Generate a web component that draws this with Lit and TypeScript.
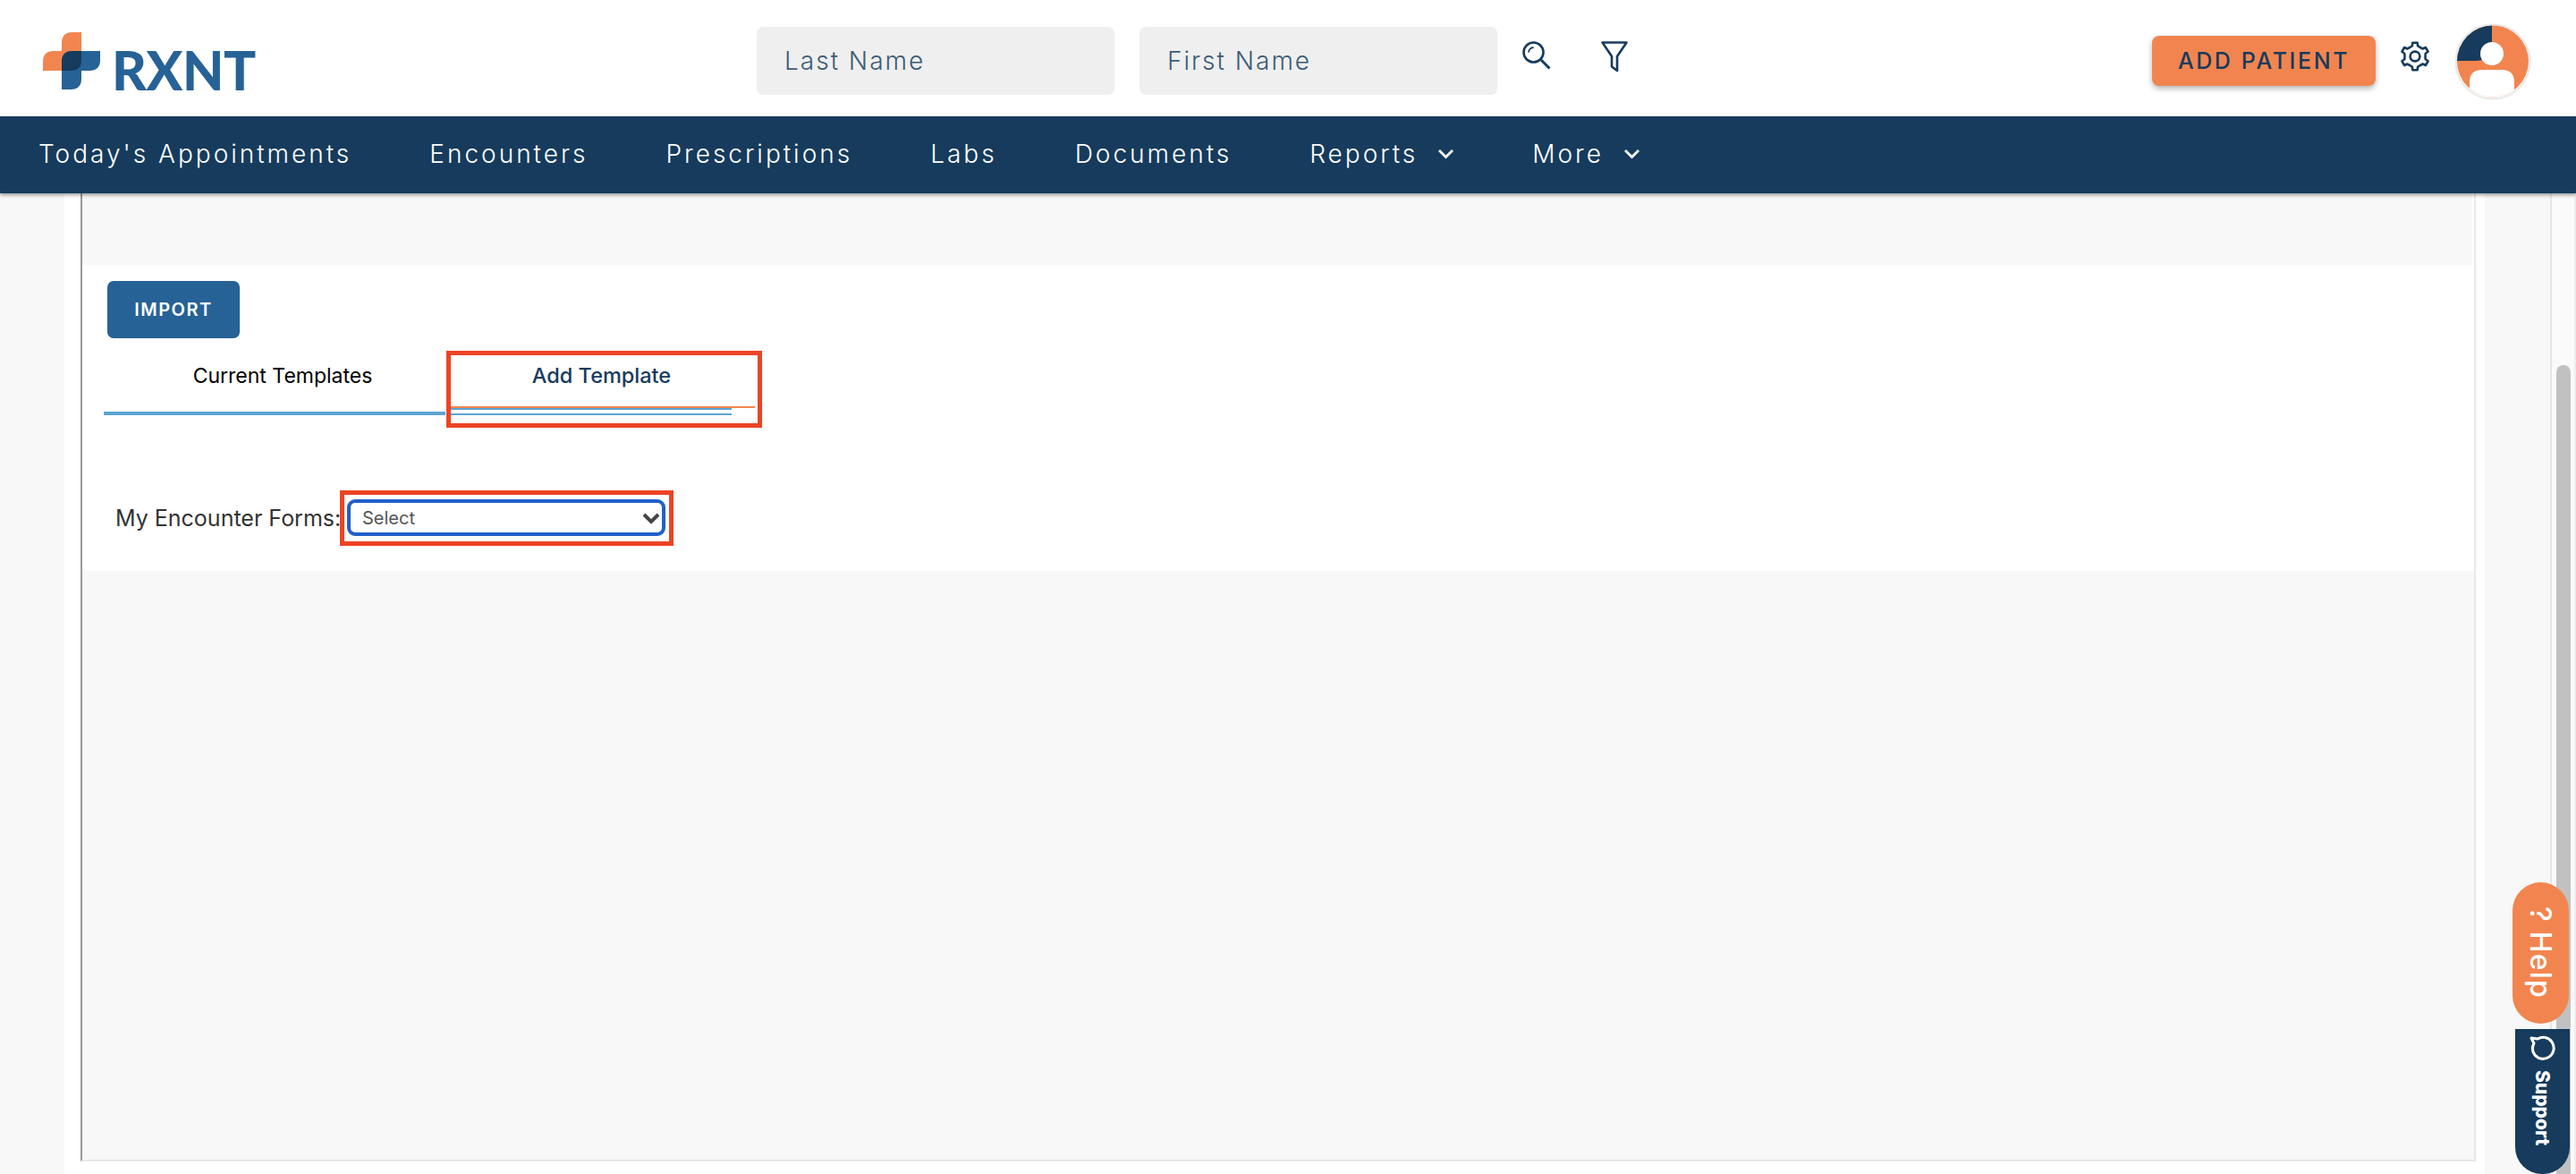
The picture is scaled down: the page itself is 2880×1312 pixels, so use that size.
import { LitElement, html, css } from "lit";
import { customElement } from "lit/decorators.js";

function gearPath(): string {
  const cx = 17, cy = 17, teeth = 6;
  const pts: string[] = [];
  for (let i = 0; i < teeth; i++) {
    const a = (i * 2 * Math.PI) / teeth - Math.PI / 2;
    const step = (2 * Math.PI) / teeth;
    const list: [number, number][] = [
      [11.5, a - step * 0.5],
      [12.2, a - step * 0.24],
      [15.5, a - step * 0.17],
      [15.5, a + step * 0.17],
      [12.2, a + step * 0.24],
    ];
    for (const [r, t] of list) {
      pts.push(`${(cx + r * Math.cos(t)).toFixed(2)} ${(cy + r * Math.sin(t)).toFixed(2)}`);
    }
  }
  return "M" + pts.join("L") + "Z";
}

const chevron = html`<svg class="chev" viewBox="0 0 19 12" width="19" height="12"><path d="M2 2l7.5 7.5L17 2" fill="none" stroke="#fff" stroke-width="2.8"/></svg>`;

@customElement("app-root")
export class AppRoot extends LitElement {
  static styles = css`
    :host { display: block; width: 2880px; height: 1312px; overflow: hidden; position: relative; background: #fff; font-family: "Inter", "Lato", sans-serif; color: #163b5c; }
    .page { display: flex; flex-direction: column; height: 1312px; }

    .header { height: 130px; display: flex; align-items: flex-start; background: #fff; padding-right: 50px; padding-left: 48px; box-sizing: border-box; flex: none; }
    .logo { display: flex; align-items: flex-end; margin-top: 36px; width: 236px; height: 64px; flex: none; }
    .logo svg { flex: none; }
    .logo-word { font-family: "Lato", sans-serif; font-weight: 900; font-size: 60px; line-height: 43px; height: 43px; color: #266296; margin-left: 13px; white-space: nowrap; letter-spacing: -0.4px; }
    .inputs { display: flex; gap: 28px; margin-left: 562px; margin-top: 30px; }
    .input { width: 400px; height: 76px; background: #efefef; border-radius: 7px; box-sizing: border-box; padding-left: 31px; display: flex; align-items: center; font-size: 28px; font-weight: 300; letter-spacing: 2px; color: #3c5c76; }
    .search { margin-left: 28px; margin-top: 46px; flex: none; }
    .filter { margin-left: 56px; margin-top: 46px; flex: none; }
    .add { margin-left: auto; margin-top: 40px; width: 250px; height: 56px; background: #f2854f; border-radius: 8px; box-shadow: 0 3px 6px rgba(0,0,0,.3); display: flex; align-items: center; justify-content: center; font-size: 25px; font-weight: 500; letter-spacing: 2.6px; color: #163b5c; }
    .gear { margin-left: 27px; margin-top: 46px; flex: none; }
    .avatar { margin-left: 28px; margin-top: 26px; flex: none; }

    .nav { height: 86px; flex: none; background: #163b5c; color: #fff; display: flex; align-items: center; gap: 87px; padding: 0 0 2px 43px; box-sizing: border-box; box-shadow: 0 2px 4px rgba(0,0,0,.4); position: relative; z-index: 2; font-size: 28px; font-weight: 300; letter-spacing: 3px; }
    .nav-item { display: flex; align-items: center; gap: 22px; }

    .content { flex: 1; display: flex; background: #f8f8f8; min-height: 0; }
    .gutter { width: 72px; flex: none; }
    .sheet { width: 2706px; flex: none; background: #fff; box-sizing: border-box; padding: 0 10px 14px 18px; display: flex; }
    .panel { flex: 1; display: flex; flex-direction: column; border-left: 2px solid #999; border-right: 2px solid #e8e8e8; border-bottom: 2px solid #e8e8e8; }
    .band { height: 80px; background: #f8f8f8; margin-right: 2px; flex: none; }
    .rest { flex: 1; background: #f8f8f8; }
    .section { height: 342px; flex: none; box-sizing: border-box; background: #fff; padding-top: 18px; display: flex; flex-direction: column; align-items: flex-start; }
    .import { margin-left: 28px; width: 148px; height: 64px; background: #266296; color: #fff; border-radius: 7px; display: flex; align-items: center; justify-content: center; font-size: 20px; font-weight: 600; letter-spacing: 1.5px; }
    .tabs { display: flex; align-items: flex-start; margin-top: 14px; margin-left: 24px; }
    .tab { width: 382px; height: 72px; box-sizing: border-box; border-bottom: 4px solid #5ba4d3; text-align: center; font-size: 23px; font-weight: 400; color: #000; line-height: 56px; margin-right: 1px; padding-left: 18px; white-space: nowrap; }
    .tab-add { width: 353px; height: 86px; box-sizing: border-box; border: 5px solid #ee4324; color: #163b5c; font-size: 23.5px; font-weight: 500; display: flex; flex-direction: column; }
    .tab-label { height: 57px; line-height: 46px; text-align: center; padding-right: 6px; flex: none; white-space: nowrap; }
    .line-o { width: 340px; height: 2px; background: #f2854f; flex: none; }
    .line-b1 { width: 314px; height: 2px; background: #5ba4d3; flex: none; }
    .line-b2 { width: 314px; height: 2px; background: #5ba4d3; flex: none; margin-top: 4px; }
    .form { display: flex; align-items: center; margin-top: 70px; margin-left: 37px; }
    .label { font-size: 25px; color: #333; white-space: nowrap; width: 251px; flex: none; }
    .redbox { width: 373px; height: 62px; box-sizing: border-box; border: 5px solid #ee4324; padding: 5px 4px 6px 3px; flex: none; }
    .select { height: 41px; box-sizing: border-box; border: 4px solid #2060c8; border-radius: 9px; display: flex; align-items: center; justify-content: space-between; padding: 0 2px 0 13px; font-family: "Inter", sans-serif; font-size: 20px; color: #555; }

    .gap { width: 73px; flex: none; }
    .scroll { flex: 1; box-sizing: border-box; background: #fafafa; border-left: 2px solid #e6e6e6; border-right: 2px solid #eee; padding: 192px 4px 0 5px; }
    .thumb { height: 100%; background: #c1c1c1; border-radius: 8px 8px 0 0; }

    .help { position: absolute; left: 2809px; top: 986px; width: 63px; height: 158px; border-radius: 32px; background: #f2854f; color: #fff; display: flex; align-items: center; justify-content: center; writing-mode: vertical-rl; font-size: 32px; font-weight: 500; letter-spacing: 1.2px; z-index: 3; }
    .support { position: absolute; left: 2812px; top: 1150px; width: 61px; height: 162px; border-radius: 0 0 30px 30px; background: #163b5c; color: #fff; display: flex; flex-direction: column; align-items: center; padding-top: 7px; box-sizing: border-box; z-index: 3; }
    .support-text { writing-mode: vertical-rl; font-size: 21px; font-weight: 800; margin-top: 9px; }
  `;

  render() {
    return html`
      <div class="page">
        <header class="header">
          <div class="logo">
            <svg width="64" height="64" viewBox="0 0 64 64">
              <path d="M33 0H43V43H0V33Q0 21 12 21H21V12Q21 0 33 0Z" fill="#f2854f"/>
              <path d="M21 33Q21 21 33 21H64V31Q64 43 52 43H43V52Q43 64 31 64H21Z" fill="#266296"/>
              <path d="M33 21H43V31Q43 43 31 43H21V33Q21 21 33 21Z" fill="#163b5c"/>
            </svg>
            <span class="logo-word">RXNT</span>
          </div>
          <div class="inputs">
            <div class="input">Last Name</div>
            <div class="input">First Name</div>
          </div>
          <svg class="search" width="32" height="32" viewBox="0 0 32 32" fill="none" stroke="#163b5c" stroke-width="2.6">
            <circle cx="12.5" cy="12.5" r="11"/>
            <path d="M20.5 20.5L30.5 30.5" stroke-width="3"/>
            <path d="M7 12.5A6 6 0 0 1 12.5 7" stroke-width="1.8"/>
          </svg>
          <svg class="filter" width="30" height="35" viewBox="0 0 30 35" fill="none" stroke="#163b5c" stroke-width="2.6" stroke-linejoin="round">
            <path d="M1.5 1.5H28.5L18 17V33L12 28.5V17Z"/>
          </svg>
          <div class="add">ADD PATIENT</div>
          <svg class="gear" width="34" height="34" viewBox="0 0 34 34" fill="none" stroke="#163b5c" stroke-width="2.6" stroke-linejoin="round">
            <path d=${gearPath()}/>
            <circle cx="17" cy="17" r="5.4"/>
          </svg>
          <svg class="avatar" width="85" height="86" viewBox="0 0 85 86">
            <defs><clipPath id="av"><circle cx="42" cy="42.5" r="40"/></clipPath></defs>
            <circle cx="42" cy="43" r="41.5" fill="#fff" stroke="#e8e8e8" stroke-width="2"/>
            <g clip-path="url(#av)">
              <rect x="0" y="0" width="85" height="86" fill="#f2854f"/>
              <path d="M0 0H41V26C41 36 34 42 22 42H0Z" fill="#163b5c"/>
              <circle cx="41" cy="34" r="13" fill="#fff"/>
              <path d="M16 86V66Q16 52 30 52H52Q66 52 66 66V86Z" fill="#fff"/>
            </g>
          </svg>
        </header>
        <nav class="nav">
          <div class="nav-item">Today's Appointments</div>
          <div class="nav-item">Encounters</div>
          <div class="nav-item">Prescriptions</div>
          <div class="nav-item">Labs</div>
          <div class="nav-item">Documents</div>
          <div class="nav-item">Reports ${chevron}</div>
          <div class="nav-item">More ${chevron}</div>
        </nav>
        <main class="content">
          <div class="gutter"></div>
          <div class="sheet">
            <div class="panel">
              <div class="band"></div>
              <section class="section">
                <div class="import">IMPORT</div>
                <div class="tabs">
                  <div class="tab">Current Templates</div>
                  <div class="tab-add">
                    <div class="tab-label">Add Template</div>
                    <div class="line-o"></div>
                    <div class="line-b1"></div>
                    <div class="line-b2"></div>
                  </div>
                </div>
                <div class="form">
                  <div class="label">My Encounter Forms:</div>
                  <div class="redbox">
                    <div class="select">
                      <span>Select</span>
                      <svg width="20" height="14" viewBox="0 0 20 14"><path d="M2 3l8 8 8-8" fill="none" stroke="#444" stroke-width="4"/></svg>
                    </div>
                  </div>
                </div>
              </section>
              <div class="rest"></div>
            </div>
          </div>
          <div class="gap"></div>
          <div class="scroll"><div class="thumb"></div></div>
        </main>
      </div>
      <div class="help">? Help</div>
      <div class="support">
        <svg width="30" height="30" viewBox="0 0 30 30" fill="none" stroke="#fff" stroke-width="3" stroke-linejoin="round">
          <path d="M2 3L9 4A12 12 0 1 1 6 22A12 12 0 0 1 5 9Z"/>
        </svg>
        <span class="support-text">Support</span>
      </div>
    `;
  }
}
